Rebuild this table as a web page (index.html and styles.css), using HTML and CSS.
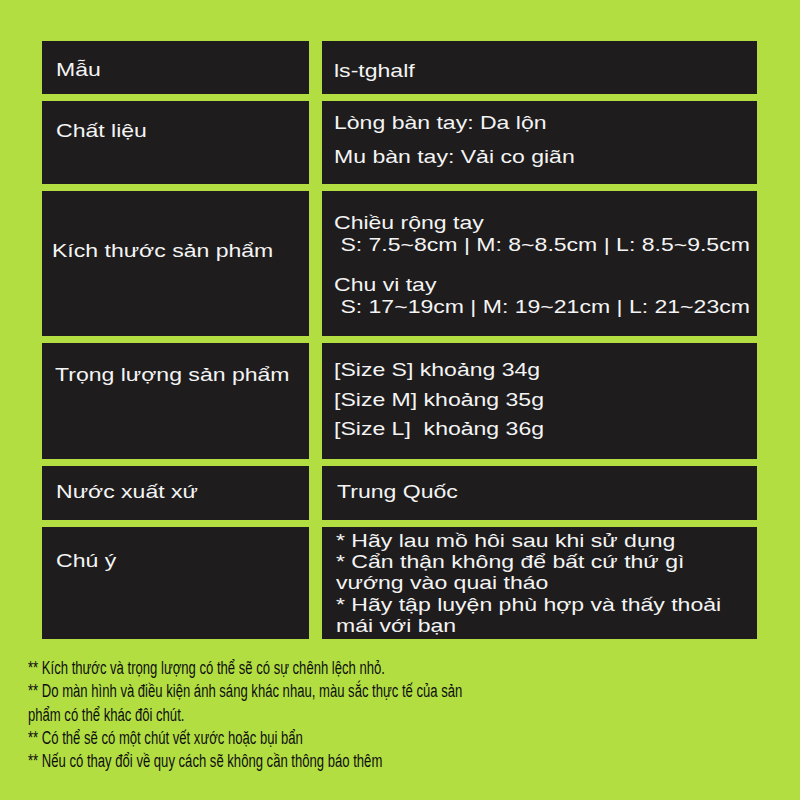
FILE: index.html
```html
<!DOCTYPE html>
<html lang="vi">
<head>
<meta charset="utf-8">
<title>Thông số sản phẩm</title>
<link rel="stylesheet" href="styles.css">
</head>
<body>
<main class="page">
  <section class="table">
    <div class="cell lab r1"><div class="ln">Mẫu</div></div>
    <div class="cell val r1"><div class="ln">ls-tghalf</div></div>

    <div class="cell lab r2"><div class="ln">Chất liệu</div></div>
    <div class="cell val r2">
      <div class="ln">Lòng bàn tay: Da lộn</div>
      <div class="ln">Mu bàn tay: Vải co giãn</div>
    </div>

    <div class="cell lab r3"><div class="ln">Kích thước sản phẩm</div></div>
    <div class="cell val r3">
      <div class="grp">
        <div class="ln">Chiều rộng tay</div>
        <div class="ln"> S: 7.5~8cm | M: 8~8.5cm | L: 8.5~9.5cm</div>
      </div>
      <div class="grp">
        <div class="ln">Chu vi tay</div>
        <div class="ln"> S: 17~19cm | M: 19~21cm | L: 21~23cm</div>
      </div>
    </div>

    <div class="cell lab r4"><div class="ln">Trọng lượng sản phẩm</div></div>
    <div class="cell val r4">
      <div class="ln">[Size S] khoảng 34g</div>
      <div class="ln">[Size M] khoảng 35g</div>
      <div class="ln">[Size L]  khoảng 36g</div>
    </div>

    <div class="cell lab r5"><div class="ln">Nước xuất xứ</div></div>
    <div class="cell val r5"><div class="ln">Trung Quốc</div></div>

    <div class="cell lab r6"><div class="ln">Chú ý</div></div>
    <div class="cell val r6">
      <div class="ln">* Hãy lau mồ hôi sau khi sử dụng</div>
      <div class="ln">* Cẩn thận không để bất cứ thứ gì</div>
      <div class="ln">vướng vào quai tháo</div>
      <div class="ln">* Hãy tập luyện phù hợp và thấy thoải</div>
      <div class="ln">mái với bạn</div>
    </div>
  </section>

  <section class="notes">
    <div class="nl">** Kích thước và trọng lượng có thể sẽ có sự chênh lệch nhỏ.</div>
    <div class="nl">** Do màn hình và điều kiện ánh sáng khác nhau, màu sắc thực tế của sản</div>
    <div class="nl">phẩm có thể khác đôi chút.</div>
    <div class="nl">** Có thể sẽ có một chút vết xước hoặc bụi bẩn</div>
    <div class="nl">** Nếu có thay đổi về quy cách sẽ không cần thông báo thêm</div>
  </section>
</main>
</body>
</html>
```

FILE: styles.css
```css
html, body {
  margin: 0;
  padding: 0;
}

body {
  background: #b2de42;
  font-family: "Liberation Sans", Arial, sans-serif;
  width: 800px;
  height: 800px;
  overflow: hidden;
}

.page {
  padding: 41px 0 0 42px;
}

.table {
  display: grid;
  grid-template-columns: 267px 435px;
  grid-template-rows: 53px 83px 145px 116px 54px 112px;
  column-gap: 13px;
  row-gap: 7px;
}

.cell {
  background: #1e1c1d;
  color: #f4f4f4;
  font-size: 18.5px;
  line-height: 22px;
  box-sizing: border-box;
  display: flex;
  flex-direction: column;
}

.ln {
  width: max-content;
  white-space: pre;
  transform: scaleX(1.245);
  transform-origin: left top;
}

.lab { padding-left: 14px; }
.val { padding-left: 12px; }

/* row 1 */
.lab.r1 { padding-top: 18px; }
.val.r1 { padding-top: 19px; }

/* row 2 */
.lab.r2 { padding-top: 19px; }
.val.r2 { padding-top: 11px; gap: 12px; }

/* row 3 */
.lab.r3 { padding-top: 49px; padding-left: 10px; }
.val.r3 { padding-top: 21px; gap: 18px; }

/* row 4 */
.lab.r4 { padding-top: 21px; padding-left: 13px; }
.val.r4 { padding-top: 12px; line-height: 29.5px; }

/* row 5 */
.lab.r5 { padding-top: 15px; }
.val.r5 { padding-top: 15px; padding-left: 15px; }

/* row 6 */
.lab.r6 { padding-top: 23px; }
.val.r6 { padding-top: 3px; padding-left: 14px; line-height: 21.2px; }

.notes {
  margin-top: 18px;
  margin-left: -14px;
  color: #0e0e0e;
  font-size: 18px;
  line-height: 23.25px;
}

.nl {
  width: max-content;
  white-space: pre;
  transform: scaleX(0.727);
  transform-origin: left top;
}
```
